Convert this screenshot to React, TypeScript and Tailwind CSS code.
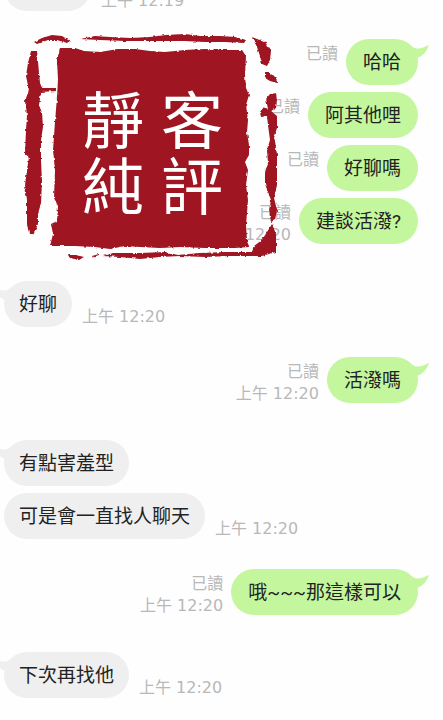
import React from 'react'

interface Message {
  text: string
  time?: string
  read?: boolean
}

interface MessageGroup {
  from: 'me' | 'them'
  messages: Message[]
}

const READ_LABEL = '已讀'

const GROUPS: MessageGroup[] = [
  {
    from: 'me',
    messages: [
      { text: '哈哈', read: true },
      { text: '阿其他哩', read: true },
      { text: '好聊嗎', read: true },
      { text: '建談活潑?', read: true, time: '上午 12:20' },
    ],
  },
  { from: 'them', messages: [{ text: '好聊', time: '上午 12:20' }] },
  { from: 'me', messages: [{ text: '活潑嗎', read: true, time: '上午 12:20' }] },
  {
    from: 'them',
    messages: [{ text: '有點害羞型' }, { text: '可是會一直找人聊天', time: '上午 12:20' }],
  },
  { from: 'me', messages: [{ text: '哦~~~那這樣可以', read: true, time: '上午 12:20' }] },
  { from: 'them', messages: [{ text: '下次再找他', time: '上午 12:20' }] },
]

const META_CLASS =
  "shrink-0 whitespace-nowrap text-[16px] leading-[22px] text-[#b8b8b8] font-['DejaVu_Sans','Noto_Sans_CJK_TC',sans-serif]"

function Tail({ side }: { side: 'left' | 'right' }) {
  return (
    <svg
      className={
        side === 'right'
          ? 'absolute -right-[11px] top-[5px] text-[#c3f69d]'
          : 'absolute -left-[11px] top-[5px] -scale-x-100 text-[#efefef]'
      }
      width="24"
      height="18"
      viewBox="0 0 24 18"
      fill="currentColor"
      aria-hidden
    >
      <path d="M0 0 L8 3 C12 6 18 4 24 1 C22 7 18 12 12 14 L12 18 L0 18 Z" />
    </svg>
  )
}

function OutgoingRow({ message, first }: { message: Message; first: boolean }) {
  return (
    <li className="flex items-start justify-end gap-2">
      <div className={`${META_CLASS} -mb-1 pt-1 text-right`}>
        {message.read && <p>{READ_LABEL}</p>}
        {message.time && <time className="block">{message.time}</time>}
      </div>
      <div className="relative rounded-full bg-[#c3f69d] px-[17px] pt-3 pb-[10px]">
        {first && <Tail side="right" />}
        <p className="relative whitespace-nowrap">{message.text}</p>
      </div>
    </li>
  )
}

function IncomingRow({ message, first }: { message: Message; first: boolean }) {
  return (
    <li className="flex items-end gap-[10px]">
      <div className="relative rounded-full bg-[#efefef] px-[15px] pt-3 pb-[10px]">
        {first && <Tail side="left" />}
        <p className="relative whitespace-nowrap">{message.text}</p>
      </div>
      {message.time && <time className={`${META_CLASS} -mb-px`}>{message.time}</time>}
    </li>
  )
}

function Stamp() {
  return (
    <svg
      className="pointer-events-none absolute left-5 top-[30px]"
      width="262"
      height="234"
      viewBox="20 30 262 234"
      role="img"
      aria-label="靜純客評"
    >
      <defs>
        <filter id="rough" x="-5%" y="-5%" width="110%" height="110%">
          <feTurbulence type="fractalNoise" baseFrequency="0.25" numOctaves="2" seed="4" />
          <feDisplacementMap
            in="SourceGraphic"
            scale="3"
            xChannelSelector="R"
            yChannelSelector="G"
          />
        </filter>
      </defs>
      <g fill="#9f1424" filter="url(#rough)">
        {/* block */}
        <path d="M60 48 L75 48 L84 51 L100 52 L118 49 L135 49 L150 51 L165 52 L185 50 L205 49 L225 50 L242 50 L246 56 L245 75 L246 88 L249 95 L246 105 L248 120 L247 132 L249 145 L249 155 L245 162 L248 170 L246 185 L248 200 L246 225 L247 240 L249 247 L235 248 L205 248 L180 247 L160 248 L140 247 L125 246 L110 249 L95 247 L75 246 L50 246 L53 234 L51 224 L57 221 L58 206 L54 198 L55 170 L53 150 L55 122 L57 97 L58 80 L57 60 Z" />
        {/* left bar */}
        <path d="M31 51 L37 51 L38 62 L40 83 L42 88 L56 88 L56 91 L41 92 L39 105 L42 113 L43 127 L41 140 L41 160 L42 182 L41 203 L38 214 L38 225 L33 234 L29 234 L27 224 L27 200 L25 185 L27 170 L29 157 L25 154 L26 130 L27 115 L25 101 L29 90 L26 76 L28 63 Z" />
        {/* top border */}
        <path d="M34 42 L42 38 L52 35 L62 36 L70 41 L67 43 L58 40 L48 40 L37 44 Z" />
        <path d="M80 39 L95 36 L110 37 L130 38 L150 37 L166 35 L185 34 L200 36 L220 36 L236 37 L246 40 L244 43 L225 42 L205 42 L185 41 L165 41 L145 41 L125 41 L100 40 Z" />
        {/* right border */}
        <path d="M252 37 L257 39 L265 42 L271 51 L270 60 L267 66 L262 64 L260 56 L257 47 Z" />
        <path d="M265 72 L269 72 L277 80 L277 83 L270 81 L265 78 Z" />
        <path d="M270 94 L276 93 L277 101 L276 108 L271 111 L277 116 L277 128 L274 137 L275 141 L277 155 L277 185 L274 198 L277 210 L275 220 L271 222 L269 210 L271 200 L265 184 L265 172 L268 163 L267 150 L270 140 L268 125 L267 116 L261 117 L260 112 L264 107 L268 109 L266 99 Z" />
        {/* bottom border */}
        <path d="M272 224 L276 234 L276 252 L262 256 L230 256 L205 257 L180 256 L160 257 L140 259 L120 257 L103 256 L112 253 L140 253 L165 252 L178 255 L200 253 L225 252 L252 252 L254 246 L262 240 Z" />
        <path d="M68 255 L76 255 L84 257 L79 260 L70 258 Z" />
        <path d="M92 256 L99 254 L99 256 L93 258 Z" />
      </g>
      <g
        className="font-['Noto_Sans_CJK_TC',sans-serif]"
        fill="#fff"
        fontSize="62"
        textAnchor="middle"
      >
        <text x="113" y="144">靜</text>
        <text x="113" y="210">純</text>
        <text x="192" y="144">客</text>
        <text x="192" y="210">評</text>
      </g>
    </svg>
  )
}

export default function App() {
  return (
    <main className="relative min-h-screen overflow-hidden bg-[#fefefe] pb-5 text-[19px] leading-6 text-[#222] font-['Roboto','Noto_Sans_CJK_TC',sans-serif]">
      {/* end of the previous message, scrolled under the top edge */}
      <div className="-mt-[35px] mb-7 flex items-end gap-[10px] pl-1">
        <div className="h-[46px] w-[87px] rounded-full bg-[#efefef]" />
        <time className={`${META_CLASS} -mb-px`}>上午 12:19</time>
      </div>

      {GROUPS.map((group, groupIdx) =>
        group.from === 'me' ? (
          <ul key={groupIdx} className="mb-[37px] flex flex-col gap-[7px] pr-[25px]">
            {group.messages.map((message, idx) => (
              <OutgoingRow key={idx} message={message} first={idx === 0} />
            ))}
          </ul>
        ) : (
          <ul key={groupIdx} className="mb-[30px] flex flex-col gap-[7px] pl-1">
            {group.messages.map((message, idx) => (
              <IncomingRow key={idx} message={message} first={idx === 0} />
            ))}
          </ul>
        ),
      )}

      <Stamp />
    </main>
  )
}
